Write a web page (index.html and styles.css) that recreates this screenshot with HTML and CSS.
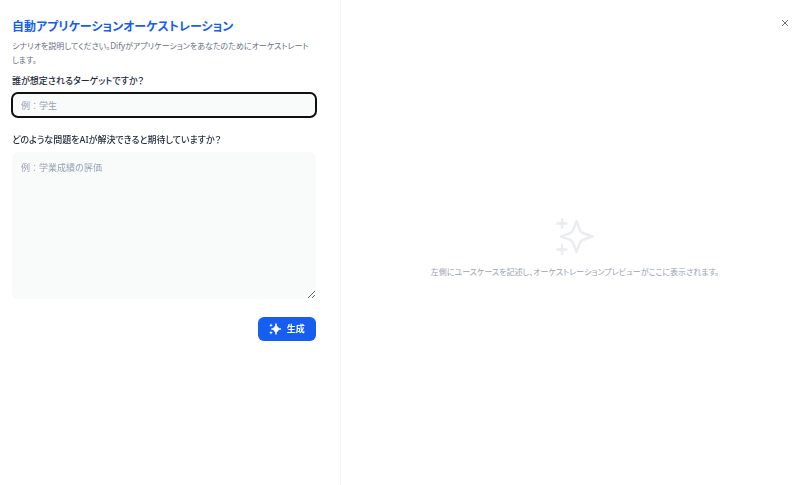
FILE: index.html
```html
<!DOCTYPE html>
<html lang="ja">
<head>
  <meta charset="UTF-8">
  <meta name="viewport" content="width=device-width, initial-scale=1.0">
  <title>自動アプリケーションオーケストレーション</title>
  <link rel="stylesheet" href="styles.css">
</head>
<body>
  <main class="dialog">
    <section class="setup">
      <h1>自動アプリケーションオーケストレーション</h1>
      <p class="description">シナリオを説明してください。Difyがアプリケーションをあなたのためにオーケストレートします。</p>

      <form>
        <label for="audience">誰が想定されるターゲットですか？</label>
        <input type="text" id="audience" placeholder="例：学生" autofocus>

        <label for="problem">どのような問題をAIが解決できると期待していますか？</label>
        <textarea id="problem" placeholder="例：学業成績の評価"></textarea>

        <button type="button" class="generate-btn">
          <svg width="12" height="12" viewBox="0 0 12 12" fill="currentColor" aria-hidden="true">
            <path d="M7 0.5 Q7.7 5.3 12 6 Q7.7 6.7 7 11.5 Q6.3 6.7 2.3 6 Q6.3 5.3 7 0.5Z" stroke="currentColor" stroke-width="0.8" stroke-linejoin="round"/>
            <path d="M2 0.5 L2.6 1.7 L3.8 2.3 L2.6 2.9 L2 4.1 L1.4 2.9 L0.2 2.3 L1.4 1.7Z"/>
            <path d="M2 7.9 L2.6 9.1 L3.8 9.7 L2.6 10.3 L2 11.5 L1.4 10.3 L0.2 9.7 L1.4 9.1Z"/>
          </svg>
          生成
        </button>
      </form>
    </section>

    <section class="preview">
      <button type="button" class="close-btn" aria-label="閉じる">
        <svg width="8" height="8" viewBox="0 0 8 8" fill="none" stroke="currentColor" aria-hidden="true">
          <path d="M1 1 L7 7 M7 1 L1 7"/>
        </svg>
      </button>
      <svg class="preview-icon" width="38" height="38" viewBox="0 0 38 38" fill="none" stroke="currentColor" stroke-width="2.4" stroke-linecap="round" stroke-linejoin="round" aria-hidden="true">
        <path d="M6 2 V11 M1.5 6.5 H10.5 M6 28 V37 M1.5 32.5 H10.5"/>
        <path d="M20.5 4 L17.5 12 Q16.5 15.5 13 16.5 L5 19.5 L13 22.5 Q16.5 23.5 17.5 27 L20.5 35 L23.5 27 Q24.5 23.5 28 22.5 L36.5 19.5 L28 16.5 Q24.5 15.5 23.5 12Z"/>
      </svg>
      <p>左側にユースケースを記述し、オーケストレーションプレビューがここに表示されます。</p>
    </section>
  </main>
</body>
</html>
```
FILE: styles.css
```css
* {
  box-sizing: border-box;
}

body {
  margin: 0;
  font-family: "Noto Sans", "Noto Sans CJK JP", sans-serif;
  font-feature-settings: "palt";
  font-size: 9px;
  line-height: 14px;
  color: #1d2939;
  background: #fff;
}

.dialog {
  display: flex;
  min-height: 100vh;
}

.setup {
  width: 42.6%;
  padding: 17px 24px 16px 12px;
  border-right: 1px solid #f2f4f7;
}

h1 {
  margin: 0 0 2px;
  font-size: 12px;
  font-weight: 600;
  line-height: 20px;
  color: #155eef;
}

.description {
  margin: 0 0 7px;
  padding-right: 6px;
  font-size: 8px;
  color: #667085;
}

form {
  display: flex;
  flex-direction: column;
}

label {
  margin-bottom: 5px;
  font-weight: 500;
}

input,
textarea {
  width: 100%;
  padding: 0 9px;
  border: none;
  border-radius: 6px;
  background: #f9fbfb;
  font: inherit;
  color: inherit;
}

input {
  height: 24px;
  margin-bottom: 16px;
}

input:focus {
  outline: 2px solid #101010;
  outline-offset: -1px;
}

textarea {
  height: 147px;
  padding-top: 9px;
  resize: vertical;
}

input,
textarea,
::placeholder {
  font-feature-settings: normal;
}

::placeholder {
  color: #98a2b3;
}

.generate-btn {
  display: flex;
  align-items: center;
  align-self: flex-end;
  gap: 6px;
  height: 24px;
  margin-top: 18px;
  padding: 0 11px;
  border: none;
  border-radius: 6px;
  background: #155eef;
  color: #fff;
  font: inherit;
  font-weight: 600;
}

.preview {
  position: relative;
  display: flex;
  flex: 1;
  flex-direction: column;
  align-items: center;
  justify-content: center;
  gap: 10px;
  padding: 10px 0 0 9px;
  color: #98a2b3;
}

.preview p {
  margin: 0;
  font-size: 8px;
}

.preview-icon {
  color: #eaecf0;
}

.close-btn {
  position: absolute;
  top: 15px;
  right: 7px;
  display: flex;
  padding: 4px;
  border: none;
  background: none;
  color: #667085;
}
```
